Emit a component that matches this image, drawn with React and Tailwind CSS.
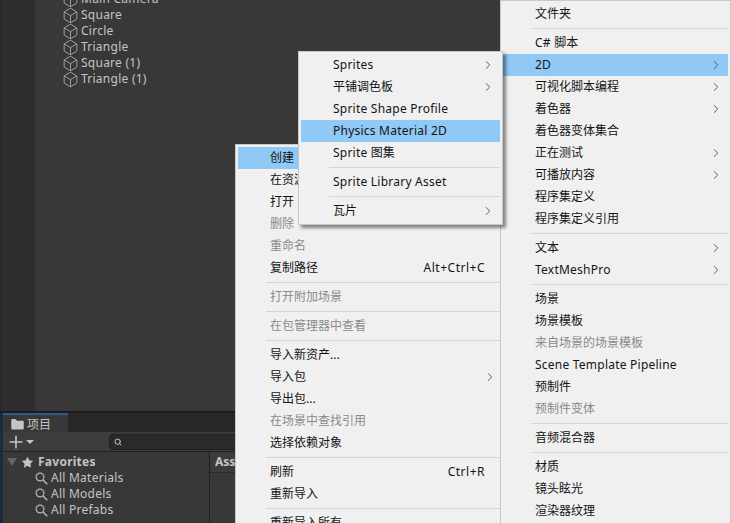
import React from "react";
import { ChevronRight, Box, Search, Plus, Folder, Star } from "lucide-react";

const FONT = "[font-family:'Noto_Sans','Noto_Sans_CJK_SC',sans-serif]";

function Label({ text }) {
  return text.split(/([\x00-\x7f]+)/).filter(Boolean).map((part, i) => (
    <span key={i} className={/^[\x00-\x7f]+$/.test(part) && part !== "..." ? "tracking-[0.23px]" : ""}>{part}</span>
  ));
}

function Row({ label, shortcut, arrow, disabled }) {
  return (
    <div className="h-[22px] flex items-center">
      <span className={`text-[12px] leading-none whitespace-nowrap ${disabled ? "text-[#8a8a8a]" : "text-[#141414]"}`}><Label text={label} /></span>
      <span className="flex-1" />
      {shortcut && <span className="text-[12px] text-[#141414] mr-[17px] tracking-[0.5px]">{shortcut}</span>}
      {arrow && <ChevronRight size={14} strokeWidth={1.6} className="text-[#555] mr-[5px]" />}
    </div>
  );
}

function Menu({ className, items }) {
  return (
    <div className={`absolute bg-[#f0f0f0] border border-[#c8c8c8] shadow-[3px_3px_3px_rgba(0,0,0,0.45)] p-[2px] ${className}`}>
      {items.map((it, i) =>
        it === "-" ? (
          <div key={i} className="pl-[28px]"><div className="h-px bg-[#d4d4d4] my-[3px]" /></div>
        ) : (
          <div key={i} className={`pl-[32px] ${it.active ? "bg-[#90c8f6]" : ""}`}>
            <Row {...it} />
          </div>
        )
      )}
    </div>
  );
}

function Magnifier() {
  return (
    <svg width="13" height="13" viewBox="0 0 13 13" fill="none" stroke="#b8b8b8" strokeWidth="1.2" className="shrink-0">
      <circle cx="5" cy="5" r="3.9" />
      <path d="M8 8 L12.2 12.2" strokeWidth="1.5" />
    </svg>
  );
}

const tree = ["Square", "Circle", "Triangle", "Square (1)", "Triangle (1)"];

export default function App() {
  return (
    <div className={`relative w-[731px] h-[523px] overflow-hidden bg-[#282828] ${FONT}`}>
      <div className="flex flex-col h-full">
        <div className="h-[413px] flex pl-[1px] border-b-[2px] border-[#1c1c1c]">
          <div className="w-[34px] bg-[#2d2d2d]" />
          <div className="flex-1 bg-[#383838] pl-[28px] -mt-[9px] text-[12px] text-[#c4c4c4]">
            {["Main Camera", ...tree].map((t) => (
              <div key={t} className="h-[16px] flex items-center gap-[2px] tracking-[0.25px]">
                <Box size={17} strokeWidth={1.1} className="text-[#b8b8b8] -ml-[1px]" />
                <span>{t}</span>
              </div>
            ))}
          </div>
        </div>
        <div className="flex-1 flex">
          <div className="w-[3px] bg-[#1a2b42]" />
          <div className="flex-1 flex flex-col">
            <div className="h-[19px] flex">
              <div className="w-[65px] bg-[#383838] border-t-2 border-[#2a5a8c] flex items-center gap-[2px] pl-[7px] pt-[2px] text-[12px] text-[#c4c4c4]">
                <Folder size={15} fill="#c4c4c4" strokeWidth={0} />
                <span>项目</span>
              </div>
            </div>
            <div className="h-[20px] bg-[#3c3c3c] border-b border-[#222] flex items-center pl-[3px]">
              <Plus size={20} strokeWidth={1.9} className="text-[#c4c4c4]" />
              <span className="w-0 h-0 border-x-[4px] border-x-transparent border-t-[4px] border-t-[#c4c4c4]" />
              <div className="ml-[75px] w-[150px] h-[16px] rounded-[4px] bg-[#2a2a2a] border border-[#222] flex items-center pl-[4px]">
                <Search size={8} strokeWidth={3} className="text-[#c4c4c4]" />
              </div>
            </div>
            <div className="flex-1 flex bg-[#383838]">
              <div className="w-[207px] border-r border-[#222] pl-[4px] text-[12px] text-[#c4c4c4] tracking-[0.25px]">
                <div className="h-[16px] flex items-center font-bold mt-[2px]">
                  <span className="w-0 h-0 border-x-[5px] border-x-transparent border-t-[8px] border-t-[#666] mr-[4px]" />
                  <Star size={13} fill="#c4c4c4" strokeWidth={0} className="mr-[4px]" />
                  <span>Favorites</span>
                </div>
                {["All Materials", "All Models", "All Prefabs"].map((t) => (
                  <div key={t} className="h-[16px] flex items-center gap-[3px] pl-[28px]">
                    <Magnifier />
                    <span>{t}</span>
                  </div>
                ))}
              </div>
              <div className="flex-1">
                <div className="h-[21px] bg-[#3c3c3c] border-b border-[#2a2a2a] flex items-center pl-[5px] text-[12px] font-bold text-[#c4c4c4]">Ass</div>
              </div>
            </div>
          </div>
        </div>
      </div>

      <Menu
        className="left-[235px] top-[144px] w-[270px] h-[390px]"
        items={[
          { label: "创建", active: true },
          { label: "在资源管理器中显示" },
          { label: "打开" },
          { label: "删除", disabled: true },
          { label: "重命名", disabled: true },
          { label: "复制路径", shortcut: "Alt+Ctrl+C" },
          "-",
          { label: "打开附加场景", disabled: true },
          "-",
          { label: "在包管理器中查看", disabled: true },
          "-",
          { label: "导入新资产..." },
          { label: "导入包", arrow: true },
          { label: "导出包..." },
          { label: "在场景中查找引用", disabled: true },
          { label: "选择依赖对象" },
          "-",
          { label: "刷新", shortcut: "Ctrl+R" },
          { label: "重新导入" },
          "-",
          { label: "重新导入所有" },
        ]}
      />

      <Menu
        className="left-[500px] top-0 w-[231px] h-[540px]"
        items={[
          { label: "文件夹" },
          "-",
          { label: "C# 脚本" },
          { label: "2D", arrow: true, active: true },
          { label: "可视化脚本编程", arrow: true },
          { label: "着色器", arrow: true },
          { label: "着色器变体集合" },
          { label: "正在测试", arrow: true },
          { label: "可播放内容", arrow: true },
          { label: "程序集定义" },
          { label: "程序集定义引用" },
          "-",
          { label: "文本", arrow: true },
          { label: "TextMeshPro", arrow: true },
          "-",
          { label: "场景" },
          { label: "场景模板" },
          { label: "来自场景的场景模板", disabled: true },
          { label: "Scene Template Pipeline" },
          { label: "预制件" },
          { label: "预制件变体", disabled: true },
          "-",
          { label: "音频混合器" },
          "-",
          { label: "材质" },
          { label: "镜头眩光" },
          { label: "渲染器纹理" },
        ]}
      />

      <Menu
        className="left-[298px] top-[51px] w-[205px]"
        items={[
          { label: "Sprites", arrow: true },
          { label: "平铺调色板", arrow: true },
          { label: "Sprite Shape Profile" },
          { label: "Physics Material 2D", active: true },
          { label: "Sprite 图集" },
          "-",
          { label: "Sprite Library Asset" },
          "-",
          { label: "瓦片", arrow: true },
        ]}
      />
    </div>
  );
}
